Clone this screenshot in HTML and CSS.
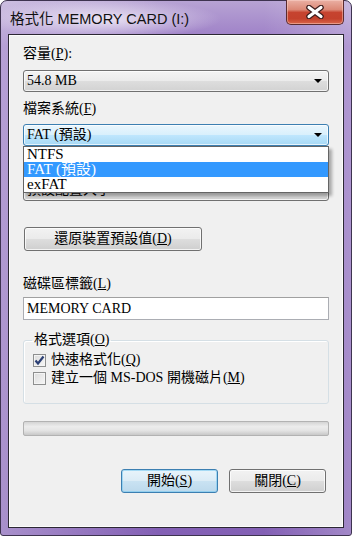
FILE: index.html
```html
<!DOCTYPE html>
<html lang="zh-Hant">
<head>
  <meta charset="UTF-8">
  <title>格式化 MEMORY CARD (I:)</title>
  <link rel="stylesheet" href="styles.css">
</head>
<body>
  <div class="window">
    <div class="titlebar">
      <span class="title">格式化 MEMORY CARD (I:)</span>
      <button class="close" type="button">
        <svg width="20" height="14" viewBox="0 0 20 14">
          <path d="M4 2.5 L16 11.5 M16 2.5 L4 11.5" stroke="#3b1c1c" stroke-width="5.5" stroke-linecap="round"/>
          <path d="M4 2.5 L16 11.5 M16 2.5 L4 11.5" stroke="#fff" stroke-width="3.2" stroke-linecap="round"/>
        </svg>
      </button>
    </div>

    <div class="client">
      <div class="lbl">容量(<u>P</u>):</div>
      <div class="combo">
        <span>54.8 MB</span>
        <span class="arrow"></span>
      </div>

      <div class="lbl">檔案系統(<u>F</u>)</div>
      <div class="combo-wrap">
        <div class="combo active">
          <span>FAT (預設)</span>
          <span class="arrow"></span>
        </div>
        <!-- open list lies over the next row -->
        <ul class="dropdown">
          <li>NTFS</li>
          <li class="sel">FAT (預設)</li>
          <li>exFAT</li>
        </ul>
      </div>

      <div class="lbl lbl-covered">配置單位大小(<u>A</u>)</div>
      <div class="combo combo-alloc">
        <span>預設配置大小</span>
        <span class="arrow"></span>
      </div>

      <button class="btn btn-restore" type="button">還原裝置預設值(<u>D</u>)</button>

      <div class="lbl lbl-volume">磁碟區標籤(<u>L</u>)</div>
      <div class="textbox">MEMORY CARD</div>

      <fieldset class="group">
        <legend>格式選項(<u>O</u>)</legend>
        <div class="check-row">
          <span class="checkbox">
            <svg width="11" height="11" viewBox="0 0 11 11">
              <path d="M1.5 5.5 L4 8.5 L9.5 1.5" fill="none" stroke="#2b3f74" stroke-width="2.2"/>
            </svg>
          </span>
          <span>快速格式化(<u>Q</u>)</span>
        </div>
        <div class="check-row">
          <span class="checkbox"></span>
          <span>建立一個 MS-DOS 開機磁片(<u>M</u>)</span>
        </div>
      </fieldset>

      <div class="progress"></div>

      <div class="actions">
        <button class="btn btn-default" type="button">開始(<u>S</u>)</button>
        <button class="btn" type="button">關閉(<u>C</u>)</button>
      </div>
    </div>
  </div>
</body>
</html>
```

FILE: styles.css
```css
body {
  margin: 0;
  background-color: #fff;
  font-family: "Liberation Serif", "Noto Sans CJK TC", serif;
  font-size: 14px;
  color: #000;
}

/* window frame */
.window {
  width: 352px;
  height: 536px;
  box-sizing: border-box;
  border: 1px solid #3e3350;
  border-radius: 7px 7px 3px 3px;
  padding: 0 7px 7px;
  display: flex;
  flex-direction: column;
  background:
    radial-gradient(ellipse 120px 20px at 100px 18px, rgba(238, 232, 246, 0.95), rgba(238, 232, 246, 0)),
    linear-gradient(to right, rgba(255, 255, 255, 0.3), rgba(255, 255, 255, 0) 45%, rgba(255, 255, 255, 0) 75%, rgba(255, 255, 255, 0.25)),
    linear-gradient(to bottom, #b7a3d4 0, #9878c4 45px, #8360b5 100%);
}

.titlebar {
  height: 33px;
  display: flex;
  justify-content: space-between;
  align-items: flex-start;
}

.title {
  font-family: "Liberation Sans", "Noto Sans CJK TC", sans-serif;
  font-size: 14.5px;
  line-height: 16px;
  margin-top: 10px;
  margin-left: 2px;
  color: #111;
}

.close {
  width: 58px;
  height: 25px;
  margin-top: -1px;
  padding: 0;
  border: 1px solid #5a2b2f;
  border-top: none;
  border-radius: 0 0 5px 5px;
  background: linear-gradient(to bottom, #eab0a4 0, #dc8876 40%, #c6432f 52%, #c4412c 78%, #d9664b 100%);
  box-shadow: inset 0 0 0 1px rgba(255, 220, 210, 0.45);
  display: flex;
  align-items: center;
  justify-content: center;
}

/* client area */
.client {
  flex: 1;
  background-color: #f0f0f0;
  border: 1px solid #2b2733;
  box-shadow: inset 0 0 0 1px #fcfcfc;
  padding: 11px 15px 0 14px;
  display: flex;
  flex-direction: column;
  align-items: flex-start;
}

.lbl {
  line-height: 16px;
  height: 16px;
}

.lbl-covered {
  visibility: hidden;
}

.combo {
  width: 306px;
  height: 22px;
  box-sizing: border-box;
  margin-top: 8px;
  margin-bottom: 9px;
  border: 1px solid #707070;
  border-radius: 3px;
  background: linear-gradient(to bottom, #f3f3f3 0, #ebebeb 48%, #dddddd 52%, #d2d2d2 100%);
  box-shadow: inset 0 0 0 1px rgba(255, 255, 255, 0.7);
  display: flex;
  align-items: center;
  justify-content: space-between;
  padding: 0 6px 0 3px;
  line-height: 16px;
}

.combo.active {
  border-color: #3c7fb1;
  background: linear-gradient(to bottom, #eaf6fd 0, #d9f0fc 48%, #bee6fd 52%, #a7d9f5 100%);
  margin: 0;
}

.arrow {
  width: 0;
  height: 0;
  border-left: 4px solid transparent;
  border-right: 4px solid transparent;
  border-top: 4px solid #000;
}

.combo-wrap {
  position: relative;
  margin-top: 7px;
  margin-bottom: 10px;
}

.dropdown {
  position: absolute;
  top: 22px;
  left: 0;
  width: 306px;
  box-sizing: border-box;
  margin: 0;
  padding: 0;
  list-style: none;
  background-color: #fff;
  border: 1px solid #646464;
  box-shadow: 3px 3px 3px rgba(0, 0, 0, 0.3);
  z-index: 2;
  font-size: 15px;
}

.dropdown li {
  height: 15px;
  line-height: 15px;
  padding-left: 3px;
}

.dropdown li.sel {
  background-color: #3399ff;
  color: #fff;
}

.combo-alloc {
  margin-top: 7px;
  margin-bottom: 0;
}

.btn {
  font-family: inherit;
  font-size: 14px;
  height: 24px;
  width: 97px;
  padding: 0;
  border: 1px solid #707070;
  border-radius: 3px;
  background: linear-gradient(to bottom, #f2f2f2 0, #ebebeb 48%, #dddddd 52%, #cfcfcf 100%);
  box-shadow: inset 0 0 0 1px rgba(255, 255, 255, 0.75);
  color: #000;
  line-height: 20px;
}

.btn-restore {
  width: 178px;
  height: 24px;
  margin-top: 26px;
  margin-left: 1px;
}

.btn-default {
  border-color: #3c7fb1;
  background: linear-gradient(to bottom, #e8f4fb 0, #dcecf6 48%, #c9e2f2 52%, #bcd9ec 100%);
  box-shadow: inset 0 0 0 1px rgba(120, 200, 240, 0.6);
}

.lbl-volume {
  margin-top: 25px;
}

.textbox {
  width: 306px;
  height: 23px;
  box-sizing: border-box;
  margin-top: 5px;
  border: 1px solid #abadb3;
  border-top-color: #a0a0a0;
  background-color: #fff;
  padding: 0 3px;
  line-height: 21px;
}

/* group box */
.group {
  width: 306px;
  height: 72px;
  box-sizing: border-box;
  margin: 12px 0 0 0;
  padding: 3px 0 0 9px;
  border: 1px solid #d5dfe5;
  border-radius: 3px;
  box-shadow: inset 1px 1px 0 #fff;
}

.group legend {
  padding: 0 2px;
  margin-left: -1px;
  line-height: 16px;
}

.check-row {
  display: flex;
  align-items: center;
  gap: 5px;
  height: 18px;
  line-height: 16px;
}

.checkbox {
  width: 13px;
  height: 13px;
  box-sizing: border-box;
  border: 1px solid #8e8f8f;
  background: linear-gradient(135deg, #dcdcdc 0, #f6f6f6 100%);
  box-shadow: inset 0 0 0 1px #f4f4f4;
  display: flex;
  align-items: center;
  justify-content: center;
}

.progress {
  width: 306px;
  height: 15px;
  box-sizing: border-box;
  margin-top: 17px;
  border: 1px solid #b2b2b2;
  border-radius: 2px;
  background: linear-gradient(to bottom, #d4d4d4 0, #ececec 35%, #e4e4e4 65%, #c8c8c8 100%);
}

.actions {
  align-self: stretch;
  display: flex;
  justify-content: flex-end;
  gap: 11px;
  margin-top: 33px;
  padding-right: 2px;
}
```
